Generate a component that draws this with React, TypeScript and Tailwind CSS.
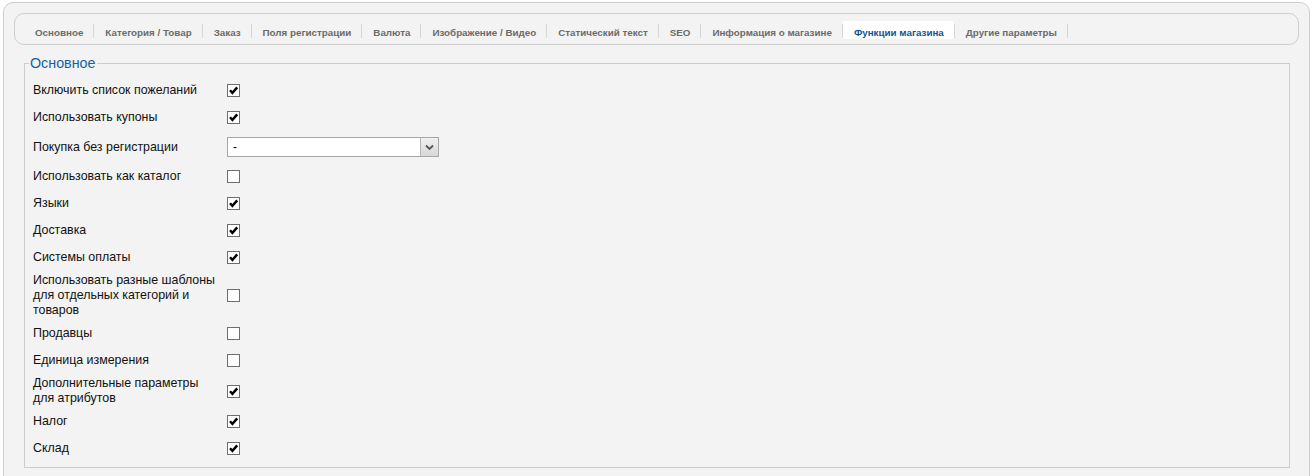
import React from 'react';

const tabs = [
    'Основное',
    'Категория / Товар',
    'Заказ',
    'Поля регистрации',
    'Валюта',
    'Изображение / Видео',
    'Статический текст',
    'SEO',
    'Информация о магазине',
    'Функции магазина',
    'Другие параметры',
];

type Row = { label: string; kind: 'check' | 'select'; checked?: boolean };

const rows: Row[] = [
    { label: 'Включить список пожеланий', kind: 'check', checked: true },
    { label: 'Использовать купоны', kind: 'check', checked: true },
    { label: 'Покупка без регистрации', kind: 'select' },
    { label: 'Использовать как каталог', kind: 'check', checked: false },
    { label: 'Языки', kind: 'check', checked: true },
    { label: 'Доставка', kind: 'check', checked: true },
    { label: 'Системы оплаты', kind: 'check', checked: true },
    { label: 'Использовать разные шаблоны для отдельных категорий и товаров', kind: 'check', checked: false },
    { label: 'Продавцы', kind: 'check', checked: false },
    { label: 'Единица измерения', kind: 'check', checked: false },
    { label: 'Дополнительные параметры для атрибутов', kind: 'check', checked: true },
    { label: 'Налог', kind: 'check', checked: true },
    { label: 'Склад', kind: 'check', checked: true },
];

const Checkbox = ({ checked }: { checked?: boolean }) => (
    <div className="w-[13px] h-[13px] border border-[#6e6e6e] bg-white flex items-center justify-center">
        {checked && (
            <svg width="11" height="11" viewBox="0 0 11 11">
                <path d="M2 5.3 L4.4 7.9 L9.2 2.4" fill="none" stroke="#000" strokeWidth="2.4" />
            </svg>
        )}
    </div>
);

const Select = () => (
    <div className="w-[212px] h-[20px] border border-[#a6a6a6] bg-white flex items-stretch">
        <span className="flex-1 pl-[5px] text-[12px] leading-[18px] text-black">-</span>
        <div className="w-[18px] border-l border-[#b5b5b5] bg-gradient-to-b from-[#f0f0f0] to-[#d8d8d8] flex items-center justify-center">
            <svg width="9" height="7" viewBox="0 0 9 7">
                <path d="M1 1.5 L4.5 5 L8 1.5" fill="none" stroke="#555" strokeWidth="1.8" />
            </svg>
        </div>
    </div>
);

export default function App() {
    return (
        <div className="bg-white min-h-screen pt-[2px] pl-[3px] pr-[5px] font-['Liberation_Sans',Arial,sans-serif]">
            <div className="h-[500px] bg-[#f3f3f3] border border-[#cfcfcf] rounded-[10px] p-[10px]">
                {/* Tabs */}
                <div className="h-[32px] border border-[#cfcfcf] rounded-[10px] bg-[#f3f3f3] flex items-center pl-[9px] pt-[1px]">
                    {tabs.map((t) => {
                        const active = t === 'Функции магазина';
                        return (
                            <div key={t} className="flex items-center">
                                <span
                                    className={`pl-[11px] pr-[10px] h-[18px] pt-[6px] leading-[12px] text-[9.8px] font-bold whitespace-nowrap ${
                                        active ? 'bg-white text-[#0f5596]' : 'text-[#6b6b6b]'
                                    }`}
                                >
                                    {t}
                                </span>
                                <div className="w-px h-[14px] mt-[2px] bg-[#d6d6d6]" />
                            </div>
                        );
                    })}
                </div>

                {/* Основное */}
                <fieldset className="mt-[10px] ml-[10px] mr-[9px] border border-[#cccccc] pl-[8px] pb-[5px]">
                    <legend className="ml-[-4px] px-[1px] text-[14.3px] leading-[16px] text-[#1a5fa2]">Основное</legend>
                    <div className="pt-[6px]">
                        {rows.map((r) => (
                            <div
                                key={r.label}
                                className={`flex items-center py-[2px] ${r.kind === 'select' ? 'min-h-[32px]' : 'min-h-[27px]'}`}
                            >
                                <div className="w-[185px] mr-[9px] text-[12.4px] leading-[15px] text-[#111]">{r.label}</div>
                                {r.kind === 'select' ? <Select /> : <Checkbox checked={r.checked} />}
                            </div>
                        ))}
                    </div>
                </fieldset>
            </div>
        </div>
    );
}
